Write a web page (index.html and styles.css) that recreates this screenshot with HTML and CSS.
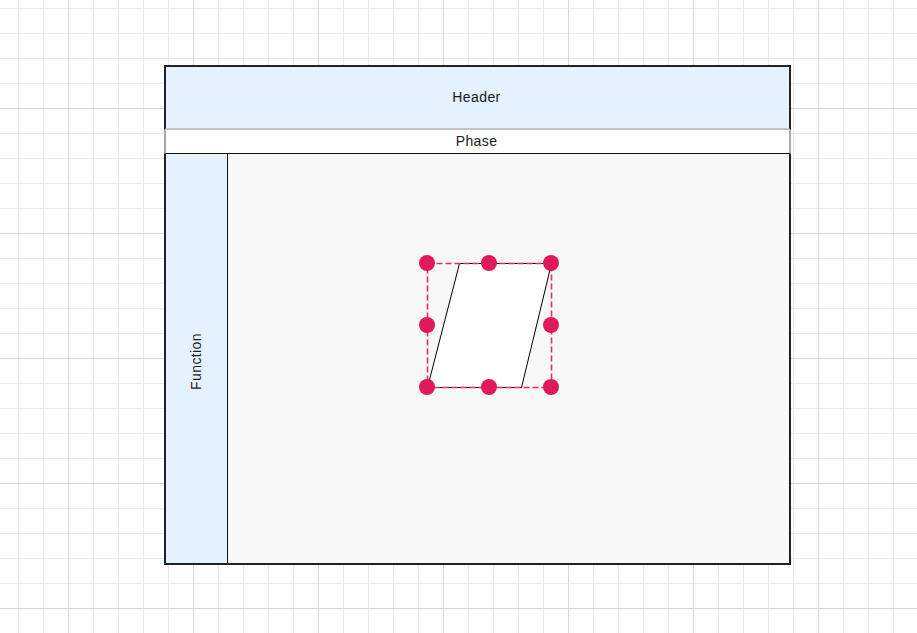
FILE: index.html
```html
<!DOCTYPE html>
<html>
<head>
<meta charset="utf-8">
<link rel="stylesheet" href="styles.css">
</head>
<body>
<div class="canvas">
  <div class="pool">
    <div class="pool-header"><span class="label">Header</span></div>
    <div class="pool-phase"><span class="label">Phase</span></div>
    <div class="pool-body">
      <div class="lane"><span class="lane-label">Function</span></div>
      <div class="lane-content"></div>
    </div>
  </div>
  <svg class="selection" width="917" height="633" viewBox="0 0 917 633">
    <polygon points="459.5,263.5 551.5,263.5 521.5,387.5 427.5,387.5" fill="#ffffff" stroke="#000000" stroke-width="1"/>
    <rect x="427.5" y="263.5" width="124" height="124" fill="none" stroke="#ec2a6a" stroke-width="1.6" stroke-dasharray="6 3"/>
    <g fill="#e0195a">
      <circle cx="427" cy="263" r="8"/>
      <circle cx="489" cy="263" r="8"/>
      <circle cx="551" cy="263" r="8"/>
      <circle cx="427" cy="325" r="8"/>
      <circle cx="551" cy="325" r="8"/>
      <circle cx="427" cy="387" r="8"/>
      <circle cx="489" cy="387" r="8"/>
      <circle cx="551" cy="387" r="8"/>
    </g>
  </svg>
</div>
</body>
</html>
```
FILE: styles.css
```css
html, body {
  margin: 0;
  padding: 0;
  overflow: hidden;
}
body {
  font-family: "Liberation Sans", Arial, sans-serif;
  color: #1a1a1a;
}
.canvas {
  position: relative;
  width: 917px;
  height: 633px;
  background-color: #ffffff;
  background-image:
    linear-gradient(to right, #d6d6d6 1px, transparent 1px),
    linear-gradient(to bottom, #d6d6d6 1px, transparent 1px),
    linear-gradient(to right, #e9e9e9 1px, transparent 1px),
    linear-gradient(to bottom, #e9e9e9 1px, transparent 1px);
  background-size: 125px 125px, 125px 125px, 25px 25px, 25px 25px;
  background-position: 68px 0, 0 108px, 18px 0, 0 8px;
}
.pool {
  position: absolute;
  left: 164px;
  top: 65px;
  width: 627px;
  display: flex;
  flex-direction: column;
}
.label {
  font-size: 14px;
  letter-spacing: 0.4px;
  position: relative;
  top: -1px;
  left: -1px;
}
.pool-header {
  box-sizing: border-box;
  height: 65px;
  background: #e4f1fe;
  border: 2px solid #222222;
  border-bottom: 2px solid #c2c2c2;
  display: flex;
  align-items: center;
  justify-content: center;
}
.pool-phase {
  box-sizing: border-box;
  height: 24px;
  background: #ffffff;
  border-left: 2px solid #a8a8a8;
  border-right: 2px solid #a8a8a8;
  border-bottom: 1px solid #111111;
  display: flex;
  align-items: center;
  justify-content: center;
}
.pool-body {
  box-sizing: border-box;
  height: 411px;
  border: 2px solid #222222;
  border-top: none;
  display: flex;
}
.lane {
  width: 61px;
  background: #e4f1fe;
  border-right: 1px solid #111111;
  display: flex;
  align-items: center;
  justify-content: center;
}
.lane-label {
  font-size: 14px;
  letter-spacing: 0.4px;
  writing-mode: vertical-rl;
  transform: rotate(180deg);
  margin-top: 6px;
  margin-left: -1px;
}
.lane-content {
  flex: 1;
  background: #f8f8f8;
}
.selection {
  position: absolute;
  left: 0;
  top: 0;
}
```
